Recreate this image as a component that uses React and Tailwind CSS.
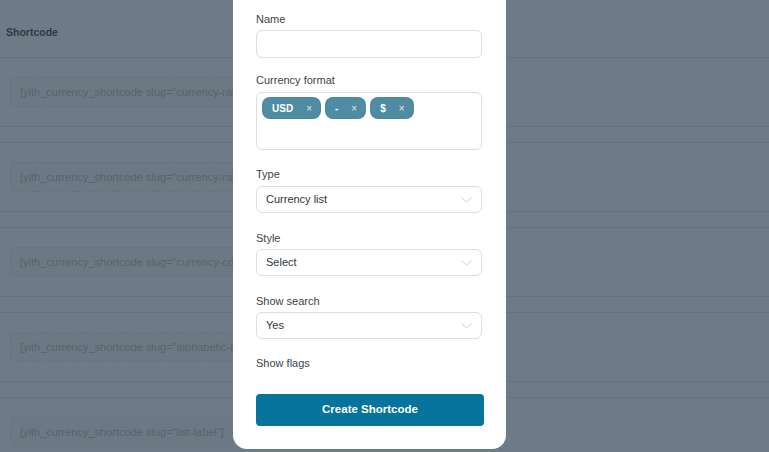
import React from "react";
import clsx from "clsx";

const shortcodes = [
  '[yith_currency_shortcode slug="currency-rates"]',
  '[yith_currency_shortcode slug="currency-rates-list"]',
  '[yith_currency_shortcode slug="currency-converter"]',
  '[yith_currency_shortcode slug="alphabetic-list"]',
  '[yith_currency_shortcode slug="list-label"]',
];

const chips = ["USD", "-", "$"];

const Label = ({ children, className }) => (
  <div className={clsx("text-[11px] leading-[14px] text-[#3d4349]", className)}>
    {children}
  </div>
);

const Chevron = () => (
  <svg width="11" height="6" viewBox="0 0 11 6" fill="none">
    <path d="M0.5 0.5L5.5 5L10.5 0.5" stroke="#c9cdd1" strokeWidth="1" />
  </svg>
);

const SelectBox = ({ value, className }) => (
  <div
    className={clsx(
      "flex h-[27px] w-[226px] items-center justify-between rounded-[6px] border border-[#dcdde0] bg-white pl-[9px] pr-[9px] text-[11px] text-[#2f3439]",
      className
    )}
  >
    <span>{value}</span>
    <Chevron />
  </div>
);

export default function App() {
  return (
    <div className="relative h-[452px] w-[769px] overflow-hidden bg-[#6e7b87] font-['Liberation_Sans',Arial,sans-serif]">
      {/* page behind the overlay */}
      <div className="flex h-[57px] items-center pl-[6px] pt-[9px] text-[10.5px] font-bold text-[#2c3945]">
        Shortcode
      </div>
      {shortcodes.map((code) => (
        <div
          key={code}
          className="mb-[15px] flex h-[70px] items-center border-y border-[#66737e] pl-[10px]"
        >
          {/* the modal covers the rest of the field */}
          <div className="h-[30px] w-[223px] overflow-hidden rounded-l-[5px] border-y border-l border-dashed border-[#66727d] bg-[#6c7984]">
            <div className="flex h-full w-[320px] items-center whitespace-nowrap pl-[9px] text-[11px] text-[#58636d]">
              {code}
            </div>
          </div>
        </div>
      ))}

      {/* modal */}
      <div className="absolute left-[233px] top-0 flex h-[449px] w-[273px] flex-col rounded-b-[14px] bg-white px-[23px] pt-[12px]">
        <Label>Name</Label>
        <div className="mt-[4px] h-[28px] w-[226px] rounded-[6px] border border-[#dcdde0]" />

        <Label className="mt-[15px]">Currency format</Label>
        <div className="mt-[5px] flex h-[58px] w-[226px] items-start gap-[4px] rounded-[6px] border border-[#dcdde0] pl-[5px] pt-[4px]">
          {chips.map((chip) => (
            <div
              key={chip}
              className="flex h-[22px] items-center rounded-[8px] border border-[#46829860] bg-[#4f8ca3] pl-[9px] pr-[8px] text-[10px] font-bold text-white"
            >
              <span>{chip}</span>
              <span className="ml-[13px] font-normal text-white/80">×</span>
            </div>
          ))}
        </div>

        <Label className="mt-[17px]">Type</Label>
        <SelectBox className="mt-[5px]" value="Currency list" />

        <Label className="mt-[18px]">Style</Label>
        <SelectBox className="mt-[4px]" value="Select" />

        <Label className="mt-[18px]">Show search</Label>
        <SelectBox className="mt-[4px]" value="Yes" />

        <Label className="mt-[17px]">Show flags</Label>

        <button className="mt-[24px] flex h-[32px] w-[228px] items-center justify-center rounded-[4px] bg-[#07759b] text-[11.5px] font-bold text-white">
          Create Shortcode
        </button>
      </div>
    </div>
  );
}
